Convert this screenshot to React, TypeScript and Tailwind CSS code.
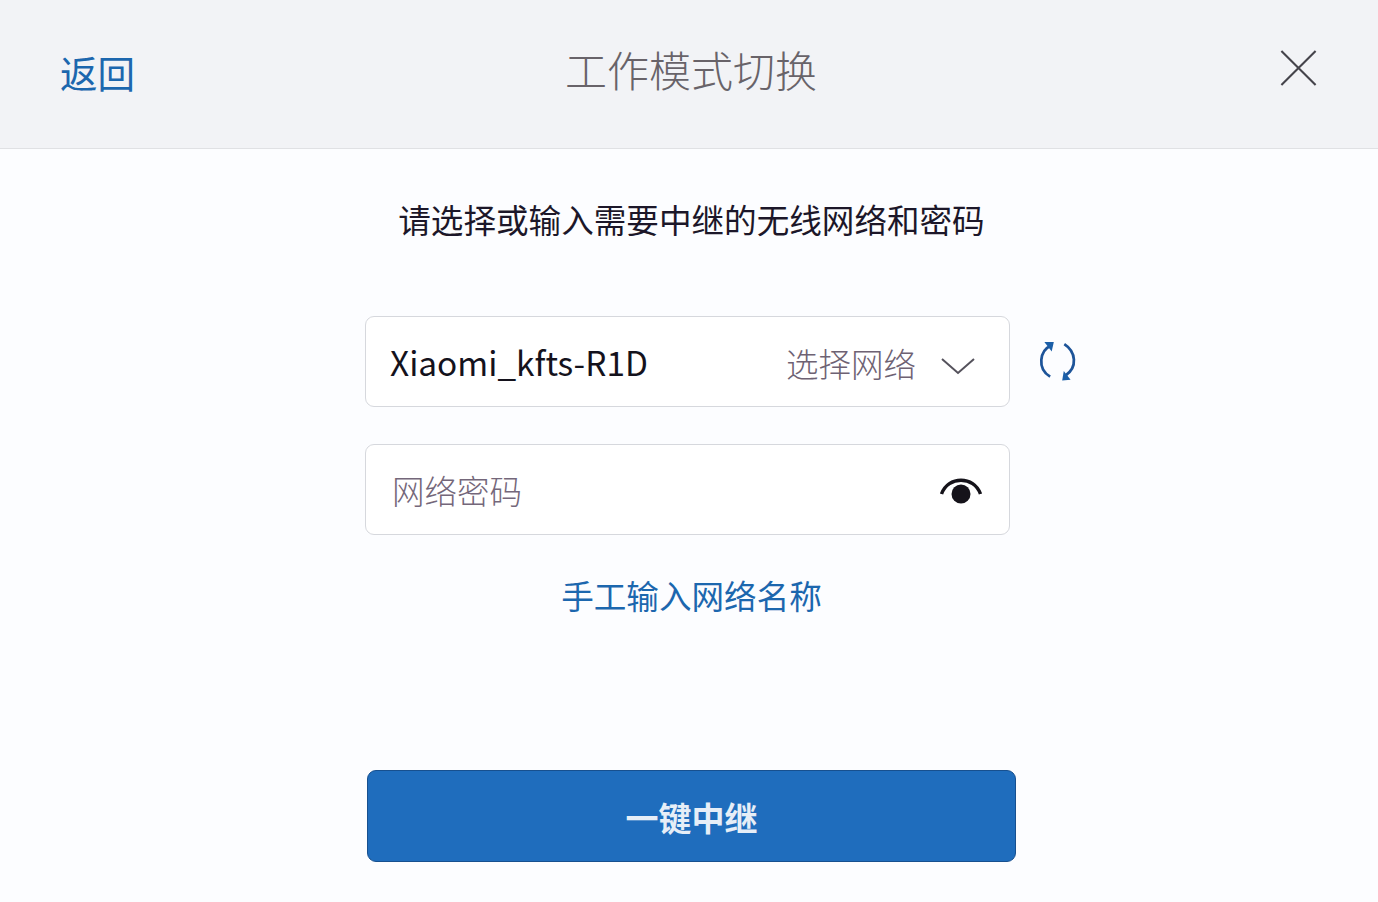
import React from 'react';

const font = "font-['Noto_Sans_CJK_SC','Noto_Sans',sans-serif]";

export default function App() {
  return (
    <div className={`h-[902px] w-[1378px] overflow-hidden bg-[#fcfdff] ${font}`}>
      {/* Header */}
      <header className="flex h-[149px] items-center justify-between border-b border-[#e0e1e4] bg-[#f2f3f6] pl-[60px] pr-[60px]">
        <span className="w-[120px] pb-[4px] text-[37.5px] font-normal leading-none text-[#1c67ae]">返回</span>
        <h1 className="ml-[4px] pb-[10px] text-[42px] font-light leading-none text-[#686369]">工作模式切换</h1>
        <div className="flex w-[120px] justify-end pb-[12px]">
          <svg width="39" height="38" viewBox="0 0 40 40" fill="none" stroke="#45444b" strokeWidth="2.2">
            <path d="M2 2 38 38M38 2 2 38" />
          </svg>
        </div>
      </header>

      {/* Form */}
      <main className="flex flex-col items-center pl-[5px]">
        <p className="mt-[48px] text-[32.6px] font-normal leading-[44px] text-[#1c1729]">请选择或输入需要中继的无线网络和密码</p>

        <div className="relative mt-[75px] ml-[-8px] flex h-[91px] w-[645px] items-center justify-between rounded-[9px] border border-[#d6d8dd] bg-white pl-[24px] pr-[33px]">
          <span className="pt-[2px] text-[33.4px] text-[#14121c]">Xiaomi_kfts-R1D</span>
          <div className="flex items-center gap-[24px]">
            <span className="pl-[1px] pt-[3px] text-[32.5px] font-light text-[#6e6273]">选择网络</span>
            <svg className="mt-[8px]" width="36" height="20" viewBox="0 0 36 20" fill="none" stroke="#55525c" strokeWidth="2">
              <path d="M2 3 18 17 34 3" />
            </svg>
          </div>
          <svg className="absolute left-[671px] top-[24px]" width="42" height="42" viewBox="0 0 40 40" fill="none">
            <path d="M13 4.5C3 9 -0.5 26 12.5 34" stroke="#1d5499" strokeWidth="2.6" />
            <path d="M26 3C37 10 39 25 27 33" stroke="#1d5499" strokeWidth="2.6" />
            <path d="M7 1 16 1 14 10Z" fill="#1b5fa8" />
            <path d="M24 37.500 32 37 25.500 28.500Z" fill="#1b5fa8" />
          </svg>
        </div>

        <div className="mt-[37px] ml-[-8px] flex h-[91px] w-[645px] items-center justify-between rounded-[9px] border border-[#d6d8dd] bg-white pl-[26px] pr-[26px]">
          <span className="pt-[2px] text-[32.5px] font-light text-[#74677a]">网络密码</span>
          <svg className="mt-[2px]" width="44" height="28" viewBox="0 0 44 28" fill="none">
            <path d="M2.500 17C9 -1.500 35 -1.500 41.500 17" stroke="#15131a" strokeWidth="3.500" />
            <circle cx="22" cy="17" r="9.500" fill="#15131a" />
          </svg>
        </div>

        <a className="mt-[38px] text-[32.6px] leading-[44px] text-[#1c67ae]">手工输入网络名称</a>

        <button className="mt-[153px] h-[92px] w-[649px] rounded-[9px] border border-[#17508f] bg-[#1f6dbd] pt-[4px] text-[33px] font-bold text-[#e6eef7]">
          一键中继
        </button>
      </main>
    </div>
  );
}
